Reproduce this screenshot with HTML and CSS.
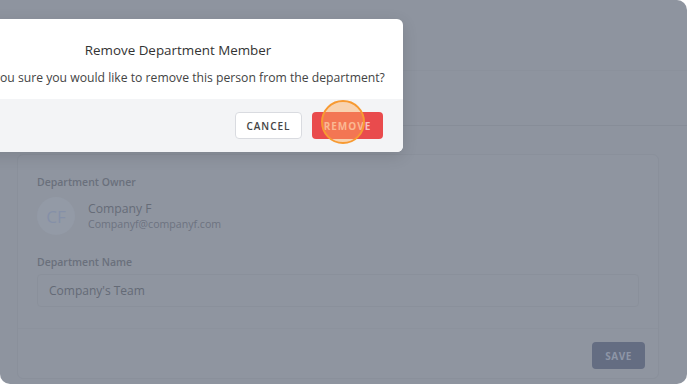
FILE: index.html
```html
<!DOCTYPE html>
<html lang="en">
<head>
    <meta charset="UTF-8">
    <meta name="viewport" content="width=device-width, initial-scale=1.0">
    <title>Remove Department Member</title>
    <link rel="stylesheet" href="styles.css">
</head>
<body>
    <div class="screen">
        <div class="topbar"></div>
        <div class="tabs"></div>

        <div class="card">
            <div class="card-body">
                <div class="label">Department Owner</div>
                <div class="owner">
                    <div class="avatar">CF</div>
                    <div class="owner-info">
                        <div class="owner-name">Company F</div>
                        <div class="owner-email">Companyf@companyf.com</div>
                    </div>
                </div>
                <div class="label name-label">Department Name</div>
                <div class="input">Company's Team</div>
            </div>
            <div class="card-footer">
                <button class="btn-save">SAVE</button>
            </div>
        </div>

        <!-- modal sits over the dimmed page -->
        <div class="modal">
            <div class="modal-body">
                <h2 class="modal-title">Remove Department Member</h2>
                <p class="modal-text">Are you sure you would like to remove this person from the department?</p>
            </div>
            <div class="modal-footer">
                <button class="btn btn-cancel">CANCEL</button>
                <button class="btn btn-remove">REMOVE<span class="click-ring"></span></button>
            </div>
        </div>
    </div>
</body>
</html>
```

FILE: styles.css
```css
body {
    margin: 0;
    padding: 0;
    background: #fff;
    font-family: "Open Sans", "Noto Sans", sans-serif;
}
.screen {
    position: relative;
    width: 687px;
    height: 384px;
    overflow: hidden;
    background: #8e949f;
    border-radius: 0 10px 10px 10px;
}
.topbar {
    height: 70px;
    border-bottom: 1px solid #8b919c;
}
.tabs {
    height: 54px;
    border-bottom: 1px solid #878d98;
}
.card {
    margin: 28px 28px 0 17px;
    background: #8f95a0;
    border: 1px solid #8a909b;
    border-radius: 6px;
}
.card-body {
    padding: 20px 19px 21px;
}
.label {
    font-size: 10.5px;
    line-height: 14px;
    font-weight: 600;
    color: #6a707c;
}
.owner {
    display: flex;
    align-items: center;
    margin-top: 8px;
}
.avatar {
    width: 38px;
    height: 38px;
    border-radius: 50%;
    background: #939aa6;
    color: #8590a8;
    font-size: 17px;
    display: flex;
    align-items: center;
    justify-content: center;
    margin-right: 13px;
}
.owner-name {
    font-size: 12.2px;
    line-height: 16px;
    color: #666c78;
}
.owner-email {
    font-size: 10.6px;
    line-height: 14px;
    color: #6d7380;
}
.name-label {
    margin-top: 20px;
}
.input {
    margin-top: 5px;
    height: 31px;
    border: 1px solid #8a909b;
    border-radius: 4px;
    padding: 0 11px;
    font-size: 12px;
    line-height: 31px;
    color: #646a76;
}
.card-footer {
    border-top: 1px solid #8c929d;
    padding: 13px 13px 9px;
    display: flex;
    justify-content: flex-end;
}
.btn-save {
    width: 53px;
    height: 27px;
    border: none;
    border-radius: 4px;
    background: #646d82;
    color: #8e96a7;
    font-family: inherit;
    font-size: 10px;
    font-weight: 700;
    letter-spacing: 0.5px;
}
.modal {
    position: absolute;
    left: -47px;
    top: 19px;
    width: 450px;
    background: #fff;
    border-radius: 6px;
    overflow: hidden;
    box-shadow: 0 4px 16px rgba(0, 0, 0, 0.12);
}
.modal-body {
    padding: 21px 10px 11px;
    text-align: center;
}
.modal-title {
    margin: 0;
    font-size: 13.4px;
    line-height: 20px;
    font-weight: 400;
    color: #333;
}
.modal-text {
    margin: 8px 0 0;
    font-size: 12.2px;
    line-height: 20px;
    color: #444;
    white-space: nowrap;
}
.modal-footer {
    background: #f3f4f6;
    padding: 13px 20px 13px;
    display: flex;
    justify-content: flex-end;
    gap: 10px;
}
.btn {
    height: 27px;
    border-radius: 4px;
    font-family: inherit;
    font-size: 10px;
    font-weight: 600;
    letter-spacing: 1px;
    padding: 0 10px;
}
.btn-cancel {
    width: 67px;
    background: #fff;
    border: 1px solid #d9dbe0;
    color: #444;
}
.btn-remove {
    position: relative;
    width: 71px;
    background: #e94b4d;
    border: none;
    color: #f7c3c0;
    font-weight: 700;
}
.click-ring {
    position: absolute;
    left: 9px;
    top: -12px;
    width: 40px;
    height: 40px;
    border-radius: 50%;
    border: 2px solid #f79a32;
    background: rgba(255, 170, 90, 0.45);
}
```
